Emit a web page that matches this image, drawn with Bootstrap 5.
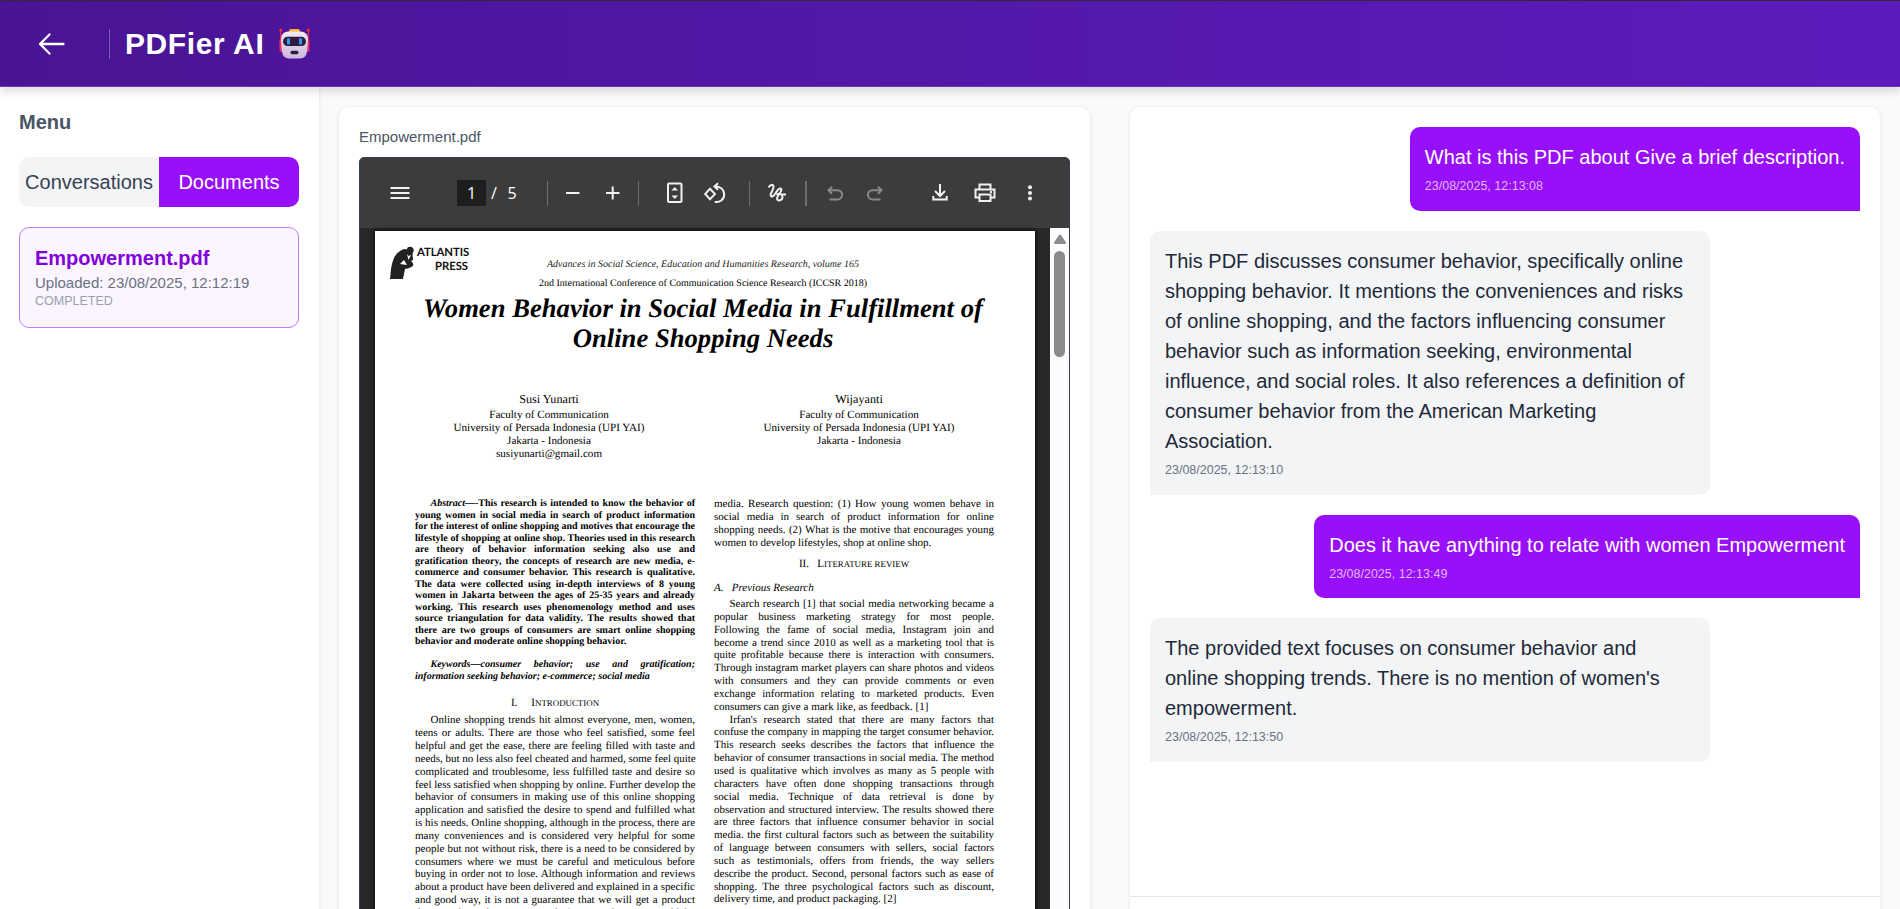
<!DOCTYPE html>
<html lang="en">
<head>
<meta charset="utf-8">
<meta name="viewport" content="width=device-width, initial-scale=1">
<title>PDFier AI</title>
<link href="https://cdn.jsdelivr.net/npm/bootstrap@5.3.0/dist/css/bootstrap.min.css" rel="stylesheet">
<style>
body{font-family:"Liberation Sans",Arial,sans-serif;font-size:20px;line-height:30px;color:#1e2939;background:#f9fafb;height:909px}
p{margin:0}
svg{display:block;flex:none}
.topbar{height:87px;background:linear-gradient(90deg,#491494,#5d1bbd);border-top:1px solid #2f2a3a;border-bottom:1px solid #6a35b8;box-shadow:0 5px 8px rgba(0,0,0,.12);z-index:2}
.back{width:40px;margin-left:32px}
.rule{width:1px;height:30px;background:rgba(255,255,255,.3);margin:0 15px 0 37px}
.brand{font-size:30px;font-weight:700;letter-spacing:.6px;line-height:38px}
.side{width:319px;padding:20px 20px 0 19px;background:#fff;box-shadow:0 1px 4px rgba(0,0,0,.1)}
.side h2{font-size:20px;line-height:30px;font-weight:700;color:#4a5565;margin:0 0 20px}
.tabs{height:50px;border-radius:10px;overflow:hidden;background:#f3f4f6;color:#364153;margin-bottom:20px}
.tabs .on{background:#9810fa;color:#fff}
.doc{height:101px;border:1px solid #c27aff;border-radius:10px;background:#faf5ff;padding:15px}
.doc b{display:block;color:#8200db;line-height:30px}
.doc p{font-size:15px;line-height:20px;color:#6a7282}
.doc small{display:block;font-size:12.5px;line-height:17px;color:#99a1af}
.panel{background:#fff;border-radius:10px;box-shadow:0 1px 4px rgba(0,0,0,.1);height:820px}
.pv{width:751px;margin:20px 0 0 20px;padding:20px 20px 0}
.pv .name{font-size:15px;line-height:20px;color:#4a5565;margin-bottom:10px}
.viewer{width:711px;height:770px;border:1px solid #364153;border-radius:5px;overflow:hidden;background:#282828}
.tools{height:70px;background:#3c3c3c;color:#fff;font:16px/26px "Open Sans","Noto Sans",sans-serif}
.tools svg{width:26px;height:26px;fill:none;stroke:#f1f1f1;stroke-width:2}
.tools .dim{opacity:.42}
.num{width:29px;height:26px;background:#1e1e1e;text-align:center;margin-left:44px}
.vl{width:1px;height:25px;background:#6f6f6f}
.track{width:19px;background:#fcfcfc;padding:6px 4px}
.thumb{width:11px;height:106px;border-radius:6px;background:#8b8b8b;margin-top:7px}
.sheet{width:660px;height:760px;margin:3px 0 0 15px;background:#fff;color:#000;box-shadow:0 0 5px #000;font-family:"Liberation Serif","Times New Roman",serif;font-size:11.1px;line-height:12.85px;text-rendering:geometricPrecision}
.press{margin:15px 0 0 14px;height:34px}
.press div{font:700 11.3px/14px Lato,sans-serif;color:#111;text-align:right;width:51px;letter-spacing:-.05px;white-space:nowrap}
.mast{text-align:center;width:660px;margin-left:-2px}
.mast .s1{font-size:10px;font-style:italic;line-height:12px;margin-top:-21px;color:#222}
.mast .s2{font-size:10px;line-height:12px;margin-top:7px}
.mast h1{font-size:26.65px;line-height:30.3px;font-weight:700;font-style:italic;margin:3px 0 0}
.auth{margin-top:38px;text-align:center;padding-left:19px;line-height:13px}
.auth>div{width:310px}
.auth .nm{font-size:12.2px;line-height:15px;margin-bottom:2px}
.colm{width:280px;white-space:nowrap;text-align:justify;text-align-last:justify}
.colm span.in{display:inline-block;width:15.5px}
.colm .e{display:block;text-align-last:left}
.abs{font-size:10px;font-weight:700;line-height:11.53px}
.intro{font-size:11px}
.hd{text-align-last:center}
.hd i{font-style:normal;display:inline-block;font-size:8.9px;line-height:10px;text-transform:uppercase}
.hd i::first-letter{font-size:11.1px}
.chat{width:750px;margin:20px 0 0 40px;height:820px}
.msgs{height:790px;padding:20px;border-bottom:1px solid #e5e7eb}
.bub{padding:15px;border-radius:10px;margin-bottom:20px;background:#f3f4f6;max-width:560.5px;white-space:nowrap}
.bub small{display:block;font-size:12.5px;line-height:18.75px;margin-top:5px;color:#6a7282}
.bot{border-bottom-left-radius:0;align-self:flex-start;width:560px}
.me{background:#9810fa;color:#fff;border-bottom-right-radius:0;align-self:flex-end}
.me small{color:#e0b8ff}
</style>
</head>
<body class="d-flex flex-column overflow-hidden">
<header class="topbar d-flex align-items-center flex-shrink-0 text-white position-relative">
  <div class="back"><svg width="40" height="32" viewBox="0 0 40 32" fill="none" stroke="#fff" stroke-width="2.300" stroke-linecap="round" stroke-linejoin="round"><path d="M31.500 16H8M17.500 6.500 8 16l9.500 9.500"/></svg></div>
  <div class="rule"></div>
  <div class="brand">PDFier AI</div>
  <svg style="margin-left:15px" width="31" height="31" viewBox="0 0 31 30" preserveAspectRatio="none">
    <defs><linearGradient id="rf" x1="0" y1="0" x2="0" y2="1"><stop stop-color="#f0eaf2"/><stop offset="1" stop-color="#cdb6de"/></linearGradient></defs>
    <path d="M1.700 2v14M29.300 2v14" stroke="#e0234f" stroke-width="1.400"/><circle cx="1.700" cy="2" r="1.500" fill="#f8312f"/><circle cx="29.300" cy="2" r="1.500" fill="#f8312f"/>
    <rect x=".5" y="11" width="4" height="12" rx="1.500" fill="#f92f60"/><rect x="26.500" y="11" width="4" height="12" rx="1.500" fill="#f92f60"/>
    <path d="M10 4Q10 1 12 1h7Q21 1 21 4z" fill="#fcb92c"/>
    <path d="M9 3.500h13Q29 4 29 11L28 23Q27 29.500 21 29.500H10Q4 29.500 3 23L2 11Q2 4 9 3.500z" fill="url(#rf)"/>
    <rect x="4" y="8.500" width="23" height="9" rx="4.500" fill="#321b41"/>
    <rect x="8" y="10" width="3" height="6" rx="1" fill="#2b9ce8"/><rect x="20" y="10" width="3" height="6" rx="1" fill="#2b9ce8"/>
    <rect x="11.500" y="22" width="8" height="3.500" rx="1.700" fill="#321b41"/>
  </svg>
</header>
<main class="d-flex flex-grow-1">
  <aside class="side flex-shrink-0">
    <h2>Menu</h2>
    <div class="tabs d-flex"><div class="w-50 d-flex align-items-center justify-content-center">Conversations</div><div class="on w-50 d-flex align-items-center justify-content-center">Documents</div></div>
    <div class="doc"><b>Empowerment.pdf</b><p>Uploaded: 23/08/2025, 12:12:19</p><small>COMPLETED</small></div>
  </aside>
  <section class="panel pv flex-shrink-0">
    <div class="name">Empowerment.pdf</div>
    <div class="viewer">
      <div class="tools d-flex align-items-center">
        <svg style="margin-left:27px" viewBox="0 0 26 26"><path d="M3.500 8h19M3.500 13h19M3.500 18h19"/></svg>
        <div class="num">1</div><div class="text-center" style="width:16px">/</div><div class="text-center" style="width:20px">5</div>
        <div class="vl" style="margin-left:25px"></div>
        <svg style="margin-left:12px" viewBox="0 0 26 26"><path d="M6 13h13.500"/></svg>
        <svg style="margin-left:14px" viewBox="0 0 26 26"><path d="M6 13h13.500M12.700 6.500v13"/></svg>
        <div class="vl" style="margin-left:12px"></div>
        <svg style="margin-left:23px" viewBox="0 0 26 26"><rect x="6" y="3.500" width="13.500" height="18.500" rx="1"/><path d="M9.500 10.500 12.750 7l3.250 3.500zM9.500 15.500l3.250 3.500 3.250-3.500z" fill="#f1f1f1" stroke="none"/></svg>
        <svg style="margin-left:14px" viewBox="0 0 26 26"><path d="M8 8.700 13 14 8 19.300 3.200 14zM16 3.300 12.500 6.500 16 9.700M12.800 6.500c6 0 9.400 3.300 9.400 8a7.400 7.400 0 0 1-9.500 7.200"/></svg>
        <div class="vl" style="margin-left:21px"></div>
        <svg style="margin-left:14px" viewBox="0 0 26 26"><path d="M4.500 7.500C6 5 9 3.500 9.500 6.500 10 10 4.500 15 7.500 16.500 11 17.500 13 7.500 16.500 8.500 20 10 13 15 13 18.500 13.200 22 18.500 20.500 18.500 17 18.500 14 15 13 12.500 14.800M17 14.500h5"/></svg>
        <div class="vl" style="margin-left:15px;width:2px"></div>
        <svg class="dim" style="margin-left:15px" viewBox="0 0 26 26"><path d="M10 6.800 6.500 10.200 10 13.700M6.500 10.200H15.500a4.600 4.600 0 0 1 0 9.200H7.500"/></svg>
        <svg class="dim" style="margin-left:14px" viewBox="0 0 26 26"><path d="M16 6.800l3.500 3.400L16 13.700M19.500 10.200H10.500a4.600 4.600 0 0 0 0 9.200H18.500"/></svg>
        <svg style="margin-left:39px" viewBox="0 0 26 26"><path d="M13 4v11.500M8 11l5 5 5-5M6.300 16v3.500h13.400V16"/></svg>
        <svg style="margin-left:19px" viewBox="0 0 26 26"><path d="M7.500 8.500V4.500h11v4M7 17.500H3.500v-8h19v8H19M7.500 14.500h11v6.500h-11z"/><path d="M18 12h2"/></svg>
        <svg style="margin-left:19px" viewBox="0 0 26 26"><g fill="#f1f1f1" stroke="none"><circle cx="13" cy="7.200" r="2"/><circle cx="13" cy="13" r="2"/><circle cx="13" cy="18.500" r="2"/></g></svg>
      </div>
      <div class="d-flex h-100">
        <div class="sheet flex-shrink-0">
          <div class="press d-flex">
            <svg width="28" height="34" viewBox="0 0 28 34"><path d="M1 33 2 23Q4 9 11 5 15 2 18 3.500 18 0 22 .800 25.500 2 24.500 5.500L23.500 8 24 14 22 15Q25 17 24 20 20 23 16 23L14 33z" fill="#222"/><path d="M11 18l4-4 3 5zM18 8l1.500 2L22 9 19.500 14z" fill="#fff"/></svg>
            <div>ATLANTIS<br>PRESS</div>
          </div>
          <div class="mast">
            <p class="s1"><span>Advances in Social Science, Education and Humanities Research, volume 165</span></p>
            <p class="s2"><span>2nd International Conference of Communication Science Research (ICCSR 2018)</span></p>
            <h1>Women Behavior in Social Media in Fulfillment of<br>Online Shopping Needs</h1>
          </div>
          <div class="auth d-flex">
            <div><p class="nm">Susi Yunarti</p>Faculty of Communication<br>University of Persada Indonesia (UPI YAI)<br>Jakarta - Indonesia<br>susiyunarti@gmail.com</div>
            <div><p class="nm">Wijayanti</p>Faculty of Communication<br>University of Persada Indonesia (UPI YAI)<br>Jakarta - Indonesia</div>
          </div>
          <div class="d-flex" style="margin:37.4px 0 0 40px;gap:19px">
            <div class="colm">
              <div class="abs"><span class="in"></span><em>Abstract</em>—-This research is intended to know the behavior of<br>young women in social media in search of product information<br>for the interest of online shopping and motives that encourage the<br>lifestyle of shopping at online shop. Theories used in this research<br>are theory of behavior information seeking also use and<br>gratification theory, the concepts of research are new media, e-<br>commerce and consumer behavior. This research is qualitative.<br>The data were collected using in-depth interviews of 8 young<br>women in Jakarta between the ages of 25-35 years and already<br>working. This research uses phenomenology method and uses<br>source triangulation for data validity. The results showed that<br>there are two groups of consumers are smart online shopping<span class="e">behavior and moderate online shopping behavior.</span></div>
              <div class="abs fst-italic" style="margin-top:11.5px"><span class="in"></span>Keywords—consumer behavior; use and gratification;<span class="e">information seeking behavior; e-commerce; social media</span></div>
              <div class="hd" style="margin-top:14.5px">I. &emsp;<i>Introduction</i></div>
              <div class="intro" style="margin-top:4.5px"><span class="in"></span>Online shopping trends hit almost everyone, men, women,<br>teens or adults. There are those who feel satisfied, some feel<br>helpful and get the ease, there are feeling filled with taste and<br>needs, but no less also feel cheated and harmed, some feel quite<br>complicated and troublesome, less fulfilled taste and desire so<br>feel less satisfied when shopping by online. Further develop the<br>behavior of consumers in making use of this online shopping<br>application and satisfied the desire to spend and fulfilled what<br>is his needs. Online shopping, although in the process, there are<br>many conveniences and is considered very helpful for some<br>people but not without risk, there is a need to be considered by<br>consumers where we must be careful and meticulous before<br>buying in order not to lose. Although information and reviews<br>about a product have been delivered and explained in a specific<br>and good way, it is not a guarantee that we will get a product<br>that matches what is expected. As a result, some could be</div>
            </div>
            <div class="colm intro">
              <div>media. Research question: (1) How young women behave in<br>social media in search of product information for online<br>shopping needs. (2) What is the motive that encourages young<span class="e">women to develop lifestyles, shop at online shop.</span></div>
              <div class="hd" style="margin-top:8.5px">II. &ensp;<i>Literature review</i></div>
              <div class="e fst-italic" style="margin-top:11.5px">A. &ensp;Previous Research</div>
              <div style="margin-top:3px"><span class="in"></span>Search research [1] that social media networking became a<br>popular business marketing strategy for most people.<br>Following the fame of social media, Instagram join and<br>become a trend since 2010 as well as a marketing tool that is<br>quite profitable because there is interaction with consumers.<br>Through instagram market players can share photos and videos<br>with consumers and they can provide comments or even<br>exchange information relating to marketed products. Even<span class="e">consumers can give a mark like, as feedback. [1]</span></div>
              <div><span class="in"></span>Irfan's research stated that there are many factors that<br>confuse the company in mapping the target consumer behavior.<br>This research seeks describes the factors that influence the<br>behavior of consumer transactions in social media. The method<br>used is qualitative which involves as many as 5 people with<br>characters have often done shopping transactions through<br>social media. Technique of data retrieval is done by<br>observation and structured interview. The results showed there<br>are three factors that influence consumer behavior in social<br>media. the first cultural factors such as between the suitability<br>of language between consumers with sellers, social factors<br>such as testimonials, offers from friends, the way sellers<br>describe the product. Second, personal factors such as ease of<br>shopping. The three psychological factors such as discount,<span class="e">delivery time, and product packaging. [2]</span></div>
            </div>
          </div>
        </div>
        <div class="track ms-auto"><svg width="12" height="10" viewBox="0 0 12 10" style="margin-left:-.5px"><path d="M5 1Q6 0 7 1l5 7.500Q12 10 11 10H1Q0 10 0 8.500z" fill="#8b8b8b"/></svg><div class="thumb"></div></div>
      </div>
    </div>
  </section>
  <section class="panel chat flex-shrink-0">
    <div class="msgs d-flex flex-column">
      <div class="bub me">What is this PDF about Give a brief description.<small>23/08/2025, 12:13:08</small></div>
      <div class="bub bot">This PDF discusses consumer behavior, specifically online<br>shopping behavior. It mentions the conveniences and risks<br>of online shopping, and the factors influencing consumer<br>behavior such as information seeking, environmental<br>influence, and social roles. It also references a definition of<br>consumer behavior from the American Marketing<br>Association.<small>23/08/2025, 12:13:10</small></div>
      <div class="bub me">Does it have anything to relate with women Empowerment<small>23/08/2025, 12:13:49</small></div>
      <div class="bub bot">The provided text focuses on consumer behavior and<br>online shopping trends. There is no mention of women's<br>empowerment.<small>23/08/2025, 12:13:50</small></div>
    </div>
  </section>
</main>
<script src="https://cdn.jsdelivr.net/npm/bootstrap@5.3.0/dist/js/bootstrap.bundle.min.js"></script>
</body>
</html>
